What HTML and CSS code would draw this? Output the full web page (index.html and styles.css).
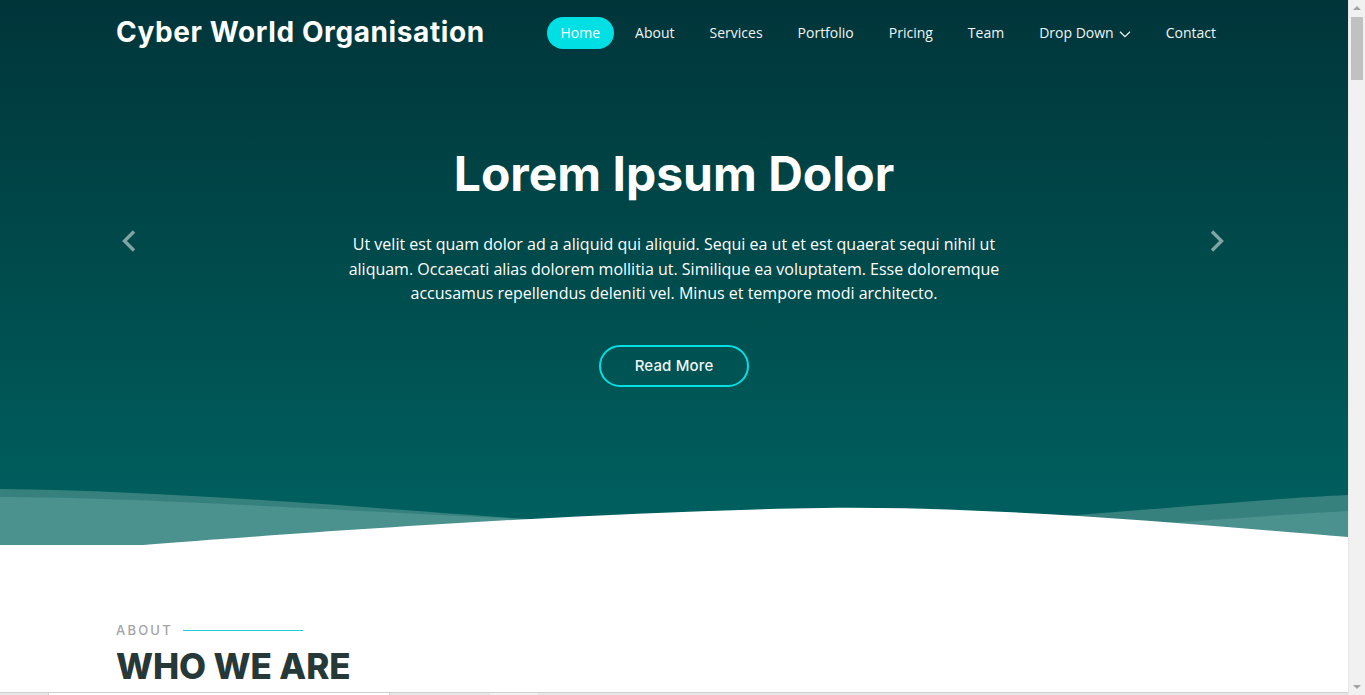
FILE: index.html
```html
<!DOCTYPE html>
<html lang="en">
<head>
<meta charset="utf-8">
<title>Cyber World Organisation</title>
<link rel="stylesheet" href="styles.css">
</head>
<body>
<section class="hero">
  <header class="topbar">
    <div class="container bar">
      <a class="logo" href="#">Cyber World Organisation</a>
      <nav class="nav">
        <a class="nav-link active" href="#">Home</a>
        <a class="nav-link" href="#">About</a>
        <a class="nav-link" href="#">Services</a>
        <a class="nav-link" href="#">Portfolio</a>
        <a class="nav-link" href="#">Pricing</a>
        <a class="nav-link" href="#">Team</a>
        <a class="nav-link drop" href="#">Drop Down
          <svg class="chev" viewBox="0 0 12 12" width="12" height="12"><path d="M1 3.8 L6 8.6 L11 3.8" fill="none" stroke="currentColor" stroke-width="1.2"/></svg>
        </a>
        <a class="nav-link" href="#">Contact</a>
      </nav>
    </div>
  </header>
  <div class="container carousel">
    <div class="slide">
      <h2 class="hero-title">Lorem Ipsum Dolor</h2>
      <p class="hero-text">Ut velit est quam dolor ad a aliquid qui aliquid. Sequi ea ut et est quaerat sequi nihil ut aliquam. Occaecati alias dolorem mollitia ut. Similique ea voluptatem. Esse doloremque accusamus repellendus deleniti vel. Minus et tempore modi architecto.</p>
      <a class="btn-more" href="#">Read More</a>
    </div>
    <button class="ctrl prev" aria-label="Previous">
      <svg viewBox="0 0 18 22" width="18" height="22"><path d="M14 1.5 L4.5 11 L14 20.5" fill="none" stroke="currentColor" stroke-width="3.4"/></svg>
    </button>
    <button class="ctrl next" aria-label="Next">
      <svg viewBox="0 0 18 22" width="18" height="22"><path d="M4 1.5 L13.5 11 L4 20.5" fill="none" stroke="currentColor" stroke-width="3.4"/></svg>
    </button>
  </div>
  <svg class="waves" viewBox="0 0 1348 60" preserveAspectRatio="none">
    <path class="wave-a" d="M0 4 C180 6 380 24 527 34 C650 40 900 42 1064 31 C1180 22 1280 13 1348 10 L1348 60 L0 60 Z"/>
    <path class="wave-b" d="M0 12 C140 12 360 27 527 34 C700 42 1000 44 1182 37 C1250 32 1310 28 1348 26 L1348 60 L0 60 Z"/>
    <path class="wave-c" d="M143 60 C300 48 600 26 824 23 C1000 21 1200 40 1348 52 L1348 60 Z"/>
  </svg>
</section>

<section class="about">
  <div class="container">
    <div class="section-title">
      <span class="kicker">About</span>
      <h2 class="heading">Who We Are</h2>
    </div>
  </div>
  <div class="strip">
    <span class="strip-box"></span>
    <span class="strip-light"></span>
  </div>
</section>

<div class="scrollbar" aria-hidden="true">
  <span class="sb-arrow up"></span>
  <span class="sb-thumb"></span>
  <span class="sb-arrow down"></span>
</div>
</body>
</html>
```
FILE: styles.css
```css
* { box-sizing: border-box; }

html, body {
  margin: 0;
  padding: 0;
  height: 100%;
  overflow: hidden;
}

body {
  font-family: "Open Sans", "Noto Sans", sans-serif;
  color: #444;
  background: #fff;
  padding-right: 17px;
}

a { text-decoration: none; color: inherit; }

.container {
  width: 100%;
  max-width: 1140px;
  margin: 0 auto;
  padding: 0 12px;
}

/* HERO */
.hero {
  height: 545px;
  display: flex;
  flex-direction: column;
  background: linear-gradient(180deg, #00353a 0%, #00494a 45%, #006261 100%);
  color: #fff;
}

.topbar {
  height: 66px;
}

.bar {
  height: 100%;
  display: flex;
  align-items: center;
  justify-content: space-between;
}

.logo {
  font-family: "Inter", "Lato", sans-serif;
  font-weight: 700;
  font-size: 28px;
  letter-spacing: 0.6px;
  color: #fff;
  margin-top: -2px;
}

.nav {
  display: flex;
  align-items: center;
  gap: 7px;
  margin-right: 2px;
}

.nav-link {
  display: flex;
  align-items: center;
  gap: 5px;
  font-size: 14px;
  line-height: 18px;
  padding: 7px 14px;
  border-radius: 50px;
  color: #f1f5f5;
}

.nav-link.active {
  background: #00dfe3;
  color: #fff;
}

.chev { display: block; margin-top: 1px; }

/* carousel */
.carousel {
  position: relative;
  flex: 1;
}

.slide {
  display: flex;
  flex-direction: column;
  align-items: center;
  text-align: center;
  padding-top: 80px;
}

.hero-title {
  margin: 0;
  font-family: "Inter", "Lato", sans-serif;
  font-weight: 700;
  font-size: 48px;
  line-height: 56px;
  letter-spacing: 0;
  color: #fff;
}

.hero-text {
  margin: 30px 0 0;
  max-width: 664px;
  font-size: 16px;
  line-height: 24.5px;
  color: #fff;
}

.btn-more {
  margin-top: 39px;
  font-family: "Inter", "Lato", sans-serif;
  font-weight: 500;
  font-size: 15px;
  line-height: 18px;
  letter-spacing: 0.15px;
  padding: 10px 34px;
  border: 2px solid #02e0e4;
  border-radius: 50px;
  color: #eef6f6;
}

.ctrl {
  position: absolute;
  top: 164px;
  width: 18px;
  height: 22px;
  padding: 0;
  border: 0;
  background: none;
  color: rgba(255, 255, 255, 0.5);
  display: flex;
  align-items: center;
  justify-content: center;
}

.ctrl.prev { left: 16px; }
.ctrl.next { right: 18px; }

.waves {
  display: block;
  width: 100%;
  height: 60px;
  margin-top: auto;
}

.wave-a { fill: #36817e; }
.wave-b { fill: #4b918e; }
.wave-c { fill: #ffffff; }

/* ABOUT */
.about {
  padding-top: 77px;
}

.section-title {
  display: flex;
  flex-direction: column;
}

.kicker {
  display: flex;
  align-items: center;
  font-family: "Inter", "Lato", sans-serif;
  font-size: 13px;
  font-weight: 500;
  line-height: 16px;
  letter-spacing: 2.2px;
  text-transform: uppercase;
  color: #a4a4a4;
}

.kicker::after {
  content: "";
  display: block;
  width: 120px;
  height: 1px;
  margin-left: 10px;
  background: #1ecfd6;
}

.heading {
  margin: 6px 0 0;
  font-family: "Inter", "Lato", sans-serif;
  font-weight: 800;
  font-size: 35px;
  line-height: 44px;
  letter-spacing: -0.1px;
  text-transform: uppercase;
  color: #263838;
}

.strip {
  display: flex;
  margin-top: 4px;
  height: 5px;
  border-top: 1px solid #cfcfcf;
  background: #e6e6e6;
}

.strip-box {
  margin-left: 48px;
  width: 342px;
  background: #fff;
  border-left: 1px solid #cfcfcf;
  border-right: 1px solid #cfcfcf;
}

.strip-light {
  margin-left: 100px;
  width: 48px;
  background: #f2f2f2;
}

/* fake browser scrollbar */
.scrollbar {
  position: fixed;
  top: 0;
  right: 0;
  width: 17px;
  height: 100%;
  background: #f1f1f1;
  border-left: 1px solid #e8e8e8;
  display: flex;
  flex-direction: column;
  align-items: center;
}

.sb-arrow {
  width: 0;
  height: 0;
  border-left: 4px solid transparent;
  border-right: 4px solid transparent;
}

.sb-arrow.up {
  margin: 6px 0 5px;
  border-bottom: 4px solid #a3a3a3;
}

.sb-arrow.down {
  margin: auto 0 6px;
  border-top: 4px solid #a3a3a3;
}

.sb-thumb {
  width: 12px;
  height: 63px;
  margin-top: 2px;
  background: #c1c1c1;
}
```
